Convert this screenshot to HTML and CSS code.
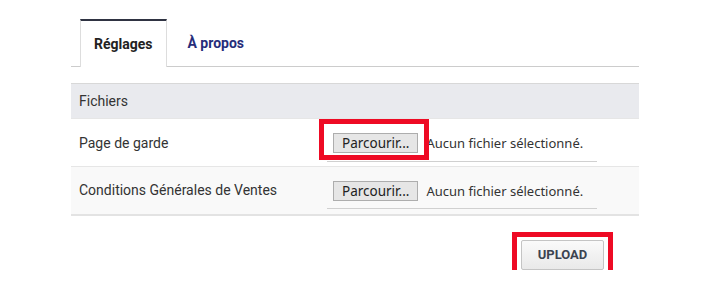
FILE: index.html
```html
<!DOCTYPE html>
<html lang="fr">
<head>
  <meta charset="UTF-8">
  <meta name="viewport" content="width=device-width, initial-scale=1.0">
  <title>Réglages</title>
  <link rel="stylesheet" href="styles.css">
</head>
<body>
  <div class="page">
    <nav class="tabs">
      <a class="tab tab-active">Réglages</a>
      <a class="tab">À propos</a>
    </nav>

    <table class="files-table">
      <thead>
        <tr><th colspan="2">Fichiers</th></tr>
      </thead>
      <tbody>
        <tr>
          <td class="label">Page de garde</td>
          <td>
            <div class="file-field">
              <span class="browse-wrap">
                <span class="mark mark-browse"></span>
                <button class="browse-btn">Parcourir...</button>
              </span>
              <span class="file-name">Aucun fichier sélectionné.</span>
            </div>
          </td>
        </tr>
        <tr class="row-alt">
          <td class="label">Conditions Générales de Ventes</td>
          <td>
            <div class="file-field">
              <span class="browse-wrap">
                <button class="browse-btn">Parcourir...</button>
              </span>
              <span class="file-name">Aucun fichier sélectionné.</span>
            </div>
          </td>
        </tr>
      </tbody>
    </table>

    <div class="actions">
      <div class="upload-wrap">
        <span class="mark mark-upload"></span>
        <button class="upload-btn">UPLOAD</button>
      </div>
    </div>
  </div>
</body>
</html>
```

FILE: styles.css
```css
/* Global */
* {
  box-sizing: border-box;
}
body {
  margin: 0;
  padding: 0;
  background: #fff;
  font-family: Roboto, 'Liberation Sans', Arial, sans-serif;
  color: #333;
}

.page {
  width: 568px;
  margin-left: 71px;
  padding-top: 19px;
}

/* Tabs */
.tabs {
  display: flex;
  padding-left: 9px;
  border-bottom: 1px solid #ccc;
}
.tab {
  display: flex;
  align-items: center;
  height: 47px;
  padding: 0 20px;
  font-size: 14px;
  font-weight: bold;
  color: #262d7a;
}
.tab-active {
  padding: 0 14px 0 13px;
  color: #222;
  background: #fff;
  border: 1px solid #ddd;
  border-top: 2px solid #2f3342;
  border-bottom: none;
  margin-bottom: -1px;
  height: 48px;
}

/* Table */
.files-table {
  width: 100%;
  margin-top: 16px;
  border-collapse: collapse;
  font-size: 14px;
}
.files-table th {
  text-align: left;
  font-weight: normal;
  height: 35px;
  padding: 0 8px;
  background: #e9eaee;
  border-top: 1px solid #d8d8d8;
  color: #333;
}
.files-table td {
  height: 48px;
  padding: 0 8px;
  border-top: 1px solid #e6e6e6;
}
.files-table tbody tr:last-child td {
  border-bottom: 2px solid #e3e3e3;
}
.files-table .label {
  width: 248px;
}
.row-alt td {
  background: #f9f9f9;
}

/* File input */
.file-field {
  display: flex;
  align-items: center;
  gap: 8px;
  width: 270px;
  height: 36px;
  padding-left: 6px;
  margin-top: 2px;
  border-bottom: 1px solid #d0d0d0;
  font-family: 'Noto Sans', 'Open Sans', sans-serif;
  font-size: 13px;
  color: #333;
}
.browse-wrap {
  position: relative;
  display: flex;
}
.browse-btn {
  height: 20px;
  padding: 0 8px;
  font-family: 'Noto Sans', 'Open Sans', sans-serif;
  font-size: 13.5px;
  line-height: 18px;
  color: #222;
  background: #e6e6e6;
  border: 1px solid #adadad;
  border-radius: 0;
}

/* Upload */
.actions {
  display: flex;
  justify-content: flex-end;
  padding: 24px 35px 0 0;
}
.upload-wrap {
  position: relative;
  display: flex;
}
.upload-btn {
  width: 83px;
  height: 30px;
  padding: 0;
  font-family: Roboto, sans-serif;
  font-size: 13px;
  font-weight: bold;
  color: #3c4350;
  background: linear-gradient(#fafafa, #e9e9e9);
  border: 1px solid #c4c4c4;
  border-radius: 2px;
}

/* Red annotation boxes */
.mark {
  position: absolute;
  border: 5px solid #ee0a24;
  pointer-events: none;
}
.mark-browse {
  left: -14px;
  top: -14px;
  width: 110px;
  height: 41px;
}
.mark-upload {
  left: -9px;
  top: -8px;
  width: 101px;
  height: 46px;
}
```
